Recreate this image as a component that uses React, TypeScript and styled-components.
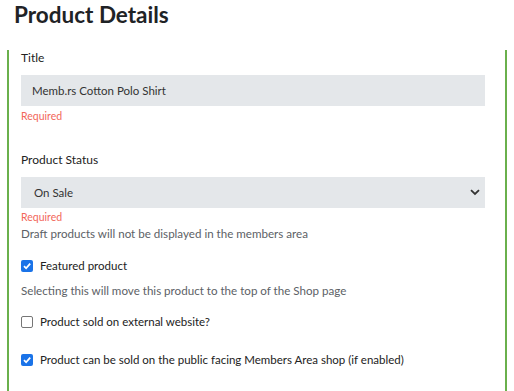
import styled, { createGlobalStyle } from "styled-components";

const GlobalStyle = createGlobalStyle`
  body {
    margin: 0;
    background: #fff;
    font-family: Lato, "Open Sans", sans-serif;
    color: #2b2b2b;
  }
`;

const Page = styled.div`
  width: 514px;
  height: 391px;
  overflow: hidden;
`;

const Heading = styled.h1`
  margin: 0;
  padding: 1px 0 0 14px;
  box-sizing: border-box;
  font-size: 22.5px;
  font-weight: 700;
  color: #1f2326;
  line-height: 28px;
  height: 50px;
`;

const Panel = styled.section`
  margin: 0 7px;
  border-left: 2px solid #6ab04c;
  border-right: 2px solid #6ab04c;
  padding: 0 20px 40px 12px;
`;

const Field = styled.div<{ $top?: number }>`
  display: flex;
  flex-direction: column;
  padding-top: ${(p) => p.$top ?? 0}px;
`;

const Label = styled.label`
  font-size: 12px;
  line-height: 16px;
  margin-bottom: 9px;
  color: #222;
`;

const TextBox = styled.div`
  height: 31px;
  background: #e4e7ea;
  display: flex;
  align-items: center;
  padding-left: 11px;
  font-size: 11.5px;
  color: #333;
`;

const SelectBox = styled(TextBox)`
  padding-left: 13px;
  padding-right: 5px;
  justify-content: space-between;
`;

const ErrorText = styled.div<{ $top?: number }>`
  color: #f2675a;
  font-size: 10.5px;
  line-height: 14px;
  margin-top: ${(p) => p.$top ?? 3}px;
`;

const Help = styled.div<{ $top?: number }>`
  color: #5c6166;
  font-size: 11.6px;
  line-height: 16px;
  margin-top: ${(p) => p.$top ?? 0}px;
`;

const CheckRow = styled.label<{ $top: number }>`
  display: flex;
  align-items: center;
  gap: 7px;
  margin-top: ${(p) => p.$top}px;
  font-size: 11.5px;
  line-height: 16px;
  color: #222;
`;

const Box = styled.span<{ $checked: boolean }>`
  width: 12px;
  height: 12px;
  border-radius: 2px;
  box-sizing: border-box;
  display: inline-flex;
  align-items: center;
  justify-content: center;
  background: ${(p) => (p.$checked ? "#1a73e8" : "#fff")};
  border: ${(p) => (p.$checked ? "none" : "1px solid #767676")};
`;

function Checkbox({ checked }: { checked: boolean }) {
  return (
    <Box $checked={checked}>
      {checked && (
        <svg width="10" height="10" viewBox="0 0 10 10">
          <path d="M2 5.2 L4.1 7.3 L8.2 2.6" fill="none" stroke="#fff" strokeWidth="1.8" />
        </svg>
      )}
    </Box>
  );
}

function Chevron() {
  return (
    <svg width="10" height="7" viewBox="0 0 10 7">
      <path d="M1 1.2 L5 5 L9 1.2" fill="none" stroke="#333" strokeWidth="1.8" />
    </svg>
  );
}

export default function App() {
  return (
    <Page>
      <GlobalStyle />
      <Heading>Product Details</Heading>
      <Panel>
        <Field>
          <Label>Title</Label>
          <TextBox>Memb.rs Cotton Polo Shirt</TextBox>
          <ErrorText>Required</ErrorText>
        </Field>
        <Field $top={29}>
          <Label>Product Status</Label>
          <SelectBox>
            <span>On Sale</span>
            <Chevron />
          </SelectBox>
          <ErrorText $top={2}>Required</ErrorText>
          <Help $top={2}>Draft products will not be displayed in the members area</Help>
        </Field>
        <CheckRow $top={16}>
          <Checkbox checked />
          Featured product
        </CheckRow>
        <Help $top={9}>Selecting this will move this product to the top of the Shop page</Help>
        <CheckRow $top={15}>
          <Checkbox checked={false} />
          Product sold on external website?
        </CheckRow>
        <CheckRow $top={22}>
          <Checkbox checked />
          Product can be sold on the public facing Members Area shop (if enabled)
        </CheckRow>
      </Panel>
    </Page>
  );
}
